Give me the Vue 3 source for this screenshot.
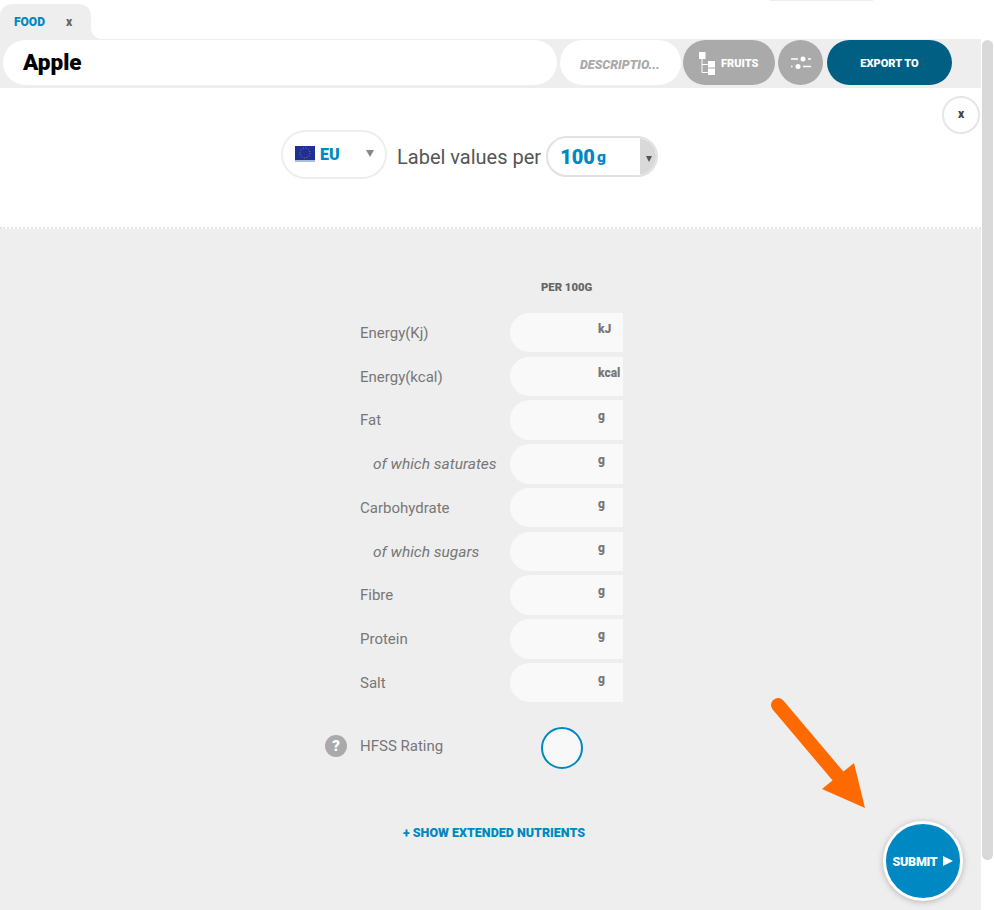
<script setup>
const rows = [
  { label: 'Energy(Kj)', unit: 'kJ' },
  { label: 'Energy(kcal)', unit: 'kcal' },
  { label: 'Fat', unit: 'g' },
  { label: 'of which saturates', unit: 'g', sub: true },
  { label: 'Carbohydrate', unit: 'g' },
  { label: 'of which sugars', unit: 'g', sub: true },
  { label: 'Fibre', unit: 'g' },
  { label: 'Protein', unit: 'g' },
  { label: 'Salt', unit: 'g' }
]
</script>

<template>
  <div class="page">
    <div class="main">
      <div class="tabs">
        <div class="tab">
          <span class="tab-name">FOOD</span>
          <span class="tab-x">x</span>
        </div>
      </div>
      <div class="toolbar">
        <div class="title">Apple</div>
        <div class="desc">DESCRIPTIO...</div>
        <div class="btn fruits">
          <svg width="16" height="23" viewBox="0 0 16 23">
            <path d="M3 6V20.500H9M3 12.500H9" fill="none" stroke="#fff" stroke-width="1" />
            <rect x="0" y="0" width="6.500" height="7" fill="#fff" />
            <rect x="9" y="9" width="7" height="6.500" fill="#fff" />
            <rect x="9" y="16.500" width="7" height="6.500" fill="#fff" />
          </svg>
          <span>FRUITS</span>
        </div>
        <div class="btn round">
          <svg width="20" height="14" viewBox="0 0 20 14">
            <path d="M0 3H7M17 3H20M0 10.500H1.500M12 10.500H20" fill="none" stroke="#fff" stroke-width="1.500" />
            <circle cx="12" cy="3" r="2.500" fill="#fff" />
            <circle cx="7" cy="10.500" r="2.500" fill="#fff" />
          </svg>
        </div>
        <div class="btn export">EXPORT TO</div>
      </div>

      <div class="settings">
        <div class="close">x</div>
        <div class="region">
          <svg class="flag" width="20" height="16" viewBox="0 0 20 16">
            <rect width="20" height="14" fill="#1f2f95" />
            <rect y="14" width="20" height="2" fill="#a9bde0" />
            <circle cx="10" cy="7" r="5" fill="none" stroke="#8d8a5c" stroke-width="1" stroke-dasharray="1 1.600" />
          </svg>
          <span class="region-name">EU</span>
          <span class="region-caret"></span>
        </div>
        <span class="per-label">Label values per</span>
        <div class="amount">
          <span class="amount-num">100</span>
          <span class="amount-unit">g</span>
          <span class="amount-side"><i></i></span>
        </div>
      </div>

      <div class="content">
        <div class="table">
          <div class="head">PER 100G</div>
          <div v-for="row in rows" :key="row.label" class="row">
            <span class="label" :class="{ sub: row.sub }">{{ row.label }}</span>
            <div class="field"><span>{{ row.unit }}</span></div>
          </div>
          <div class="hfss">
            <span class="help">?</span>
            <span class="hfss-label">HFSS Rating</span>
            <span class="hfss-circle"></span>
          </div>
          <div class="extended">+ SHOW EXTENDED NUTRIENTS</div>
        </div>
      </div>
    </div>

    <div class="scroll"><div class="thumb"></div></div>

    <div class="top-mark"></div>

    <svg class="arrow" width="110" height="120" viewBox="0 0 110 120">
      <path d="M8 15L68 86" fill="none" stroke="#ff6a00" stroke-width="14" stroke-linecap="round" />
      <path d="M95 118L84 73L52 99Z" fill="#ff6a00" />
    </svg>

    <div class="submit">SUBMIT <span class="play"></span></div>
  </div>
</template>

<style>
html, body { margin: 0; padding: 0; background: #fff; overflow: hidden; }
</style>

<style scoped>
.page {
  position: relative;
  display: flex;
  width: 994px;
  height: 910px;
  overflow: hidden;
  font-family: Roboto, "Liberation Sans", sans-serif;
  background: #fff;
}
.main {
  width: 981px;
  height: 910px;
  display: flex;
  flex-direction: column;
  flex: none;
}
.tabs {
  height: 39px;
  padding-top: 4px;
  box-sizing: border-box;
  display: flex;
  flex: none;
}
.tab {
  position: relative;
  width: 91px;
  background: #eee;
  border-radius: 12px 12px 0 0;
  display: flex;
  align-items: center;
  padding: 1px 0 0 14px;
  box-sizing: border-box;
  font-weight: 900;
  font-size: 12px;
}
.tab::after {
  content: "";
  position: absolute;
  left: 91px;
  bottom: 0;
  width: 10px;
  height: 10px;
  background: radial-gradient(circle at 100% 0, transparent 9.500px, #eee 10px);
}
.tab-name { color: #0088c2; width: 52px; }
.tab-x { color: #666; }
.toolbar {
  height: 49px;
  flex: none;
  box-sizing: border-box;
  background: #eee;
  padding: 1px 0 3px 3px;
  display: flex;
}
.title {
  width: 554px;
  height: 45px;
  background: #fff;
  border-radius: 23px;
  font-size: 22.500px;
  font-weight: 900;
  color: #000;
  line-height: 45px;
  padding-left: 20px;
  box-sizing: border-box;
}
.desc {
  margin-left: 3px;
  width: 121px;
  height: 45px;
  background: #fff;
  border-radius: 23px;
  font-size: 12.500px;
  font-weight: 900;
  font-style: italic;
  color: #aaa;
  line-height: 50px;
  padding-left: 20px;
  box-sizing: border-box;
  white-space: nowrap;
}
.btn {
  height: 45px;
  border-radius: 23px;
  background: #aaa;
  color: #fff;
  font-size: 11px;
  font-weight: 900;
  display: flex;
  align-items: center;
  justify-content: center;
  flex: none;
}
.fruits {
  margin-left: 2px;
  width: 92px;
  gap: 6px;
  justify-content: flex-start;
  padding-left: 16px;
  box-sizing: border-box;
}
.fruits svg { margin-top: 2px; }
.fruits span { margin-top: 2px; }
.round { margin-left: 3px; width: 45px; }
.export {
  margin-left: 4px;
  width: 125px;
  background: #005f83;
  box-sizing: border-box;
  padding-top: 2px;
}
.settings {
  position: relative;
  height: 141px;
  flex: none;
  box-sizing: border-box;
  border-bottom: 2px dotted #e4e4e4;
  display: flex;
  align-items: flex-start;
  padding: 42px 0 0 281px;
}
.close {
  position: absolute;
  top: 8px;
  right: 1px;
  width: 38px;
  height: 38px;
  box-sizing: border-box;
  border: 2px solid #e6e6e6;
  border-radius: 50%;
  background: #fff;
  text-align: center;
  font-size: 12px;
  font-weight: 900;
  line-height: 32px;
  color: #444;
}
.region {
  width: 106px;
  height: 49px;
  box-sizing: border-box;
  border: 2px solid #eee;
  border-radius: 25px;
  display: flex;
  align-items: center;
  padding-left: 12px;
}
.flag { margin-top: -1px; }
.region-name {
  margin-left: 5px;
  font-size: 16px;
  font-weight: 900;
  color: #0088c2;
}
.region-caret {
  margin-left: 26px;
  margin-top: -2px;
  width: 0;
  height: 0;
  border-left: 4px solid transparent;
  border-right: 4px solid transparent;
  border-top: 7px solid #888;
}
.per-label {
  margin-left: 10px;
  font-size: 20px;
  color: #555;
  line-height: 54px;
  white-space: nowrap;
}
.amount {
  position: relative;
  margin-left: 5px;
  margin-top: 6px;
  width: 112px;
  height: 41px;
  box-sizing: border-box;
  border: 2px solid #e2e2e2;
  border-radius: 21px;
  display: flex;
  align-items: center;
  padding-left: 12px;
  color: #0088c2;
  font-weight: 900;
  overflow: hidden;
}
.amount-num { font-size: 20px; }
.amount-unit { font-size: 15.500px; margin-left: 2px; }
.amount-side {
  position: absolute;
  top: -2px;
  right: -2px;
  bottom: -2px;
  width: 18px;
  background: #d9d9d9;
  display: flex;
  align-items: center;
  justify-content: center;
}
.amount-side i {
  margin-top: 4px;
  margin-right: 1px;
  width: 0;
  height: 0;
  border-left: 3px solid transparent;
  border-right: 3px solid transparent;
  border-top: 6px solid #555;
}
.content {
  flex: 1;
  background: #eee;
  padding-left: 360px;
}
.table { width: 263px; position: relative; }
.head {
  padding: 52px 0 0 181px;
  height: 31.800px;
  box-sizing: content-box;
  font-size: 11.300px;
  font-weight: 900;
  color: #666;
  line-height: 14px;
  white-space: nowrap;
}
.row {
  height: 43.750px;
  display: flex;
  align-items: flex-start;
}
.label {
  width: 150px;
  flex: none;
  font-size: 15px;
  color: #777;
  line-height: 40.400px;
  white-space: nowrap;
}
.label.sub { padding-left: 13px; box-sizing: border-box; font-style: italic; font-size: 15.500px; }
.field {
  width: 113px;
  height: 39.500px;
  background: #f9f9f9;
  border-radius: 20px 0 0 20px;
  padding-left: 88px;
  box-sizing: border-box;
  font-size: 12px;
  font-weight: 900;
  color: #777;
  line-height: 33px;
  white-space: nowrap;
}
.hfss {
  position: relative;
  display: flex;
  align-items: flex-start;
  padding-top: 20px;
  height: 64px;
}
.help {
  position: absolute;
  left: -35px;
  top: 28px;
  width: 22px;
  height: 22px;
  border-radius: 50%;
  background: #aaa;
  color: #fff;
  font-size: 15px;
  font-weight: 900;
  text-align: center;
  line-height: 22px;
}
.hfss-label {
  width: 181px;
  flex: none;
  font-size: 15px;
  color: #777;
  line-height: 38px;
}
.hfss-circle {
  width: 42px;
  height: 42px;
  box-sizing: border-box;
  border: 2px solid #0088c2;
  border-radius: 50%;
  background: #f8f8f8;
}
.extended {
  margin-top: 35px;
  padding-left: 43px;
  font-size: 12.500px;
  font-weight: 900;
  color: #0088c2;
  line-height: 14px;
  white-space: nowrap;
}
.scroll {
  flex: 1;
  padding: 40px 0 0 1px;
}
.thumb {
  width: 11px;
  height: 820px;
  background: #d9d9d9;
  border-radius: 6px;
}
.top-mark {
  position: absolute;
  top: 0;
  left: 770px;
  width: 103px;
  height: 1px;
  background: #eee;
}
.arrow {
  position: absolute;
  left: 770px;
  top: 690px;
}
.submit {
  position: absolute;
  left: 883px;
  top: 821px;
  width: 80px;
  height: 80px;
  box-sizing: border-box;
  border: 3px solid #fff;
  border-radius: 50%;
  background: #0088c2;
  box-shadow: 0 1px 6px rgba(0, 0, 0, 0.25);
  color: #fff;
  font-size: 12.500px;
  font-weight: 900;
  display: flex;
  align-items: center;
  justify-content: center;
  gap: 6px;
  letter-spacing: -0.3px;
}
.play {
  width: 0;
  height: 0;
  border-top: 5px solid transparent;
  border-bottom: 5px solid transparent;
  border-left: 10px solid #fff;
}
</style>
